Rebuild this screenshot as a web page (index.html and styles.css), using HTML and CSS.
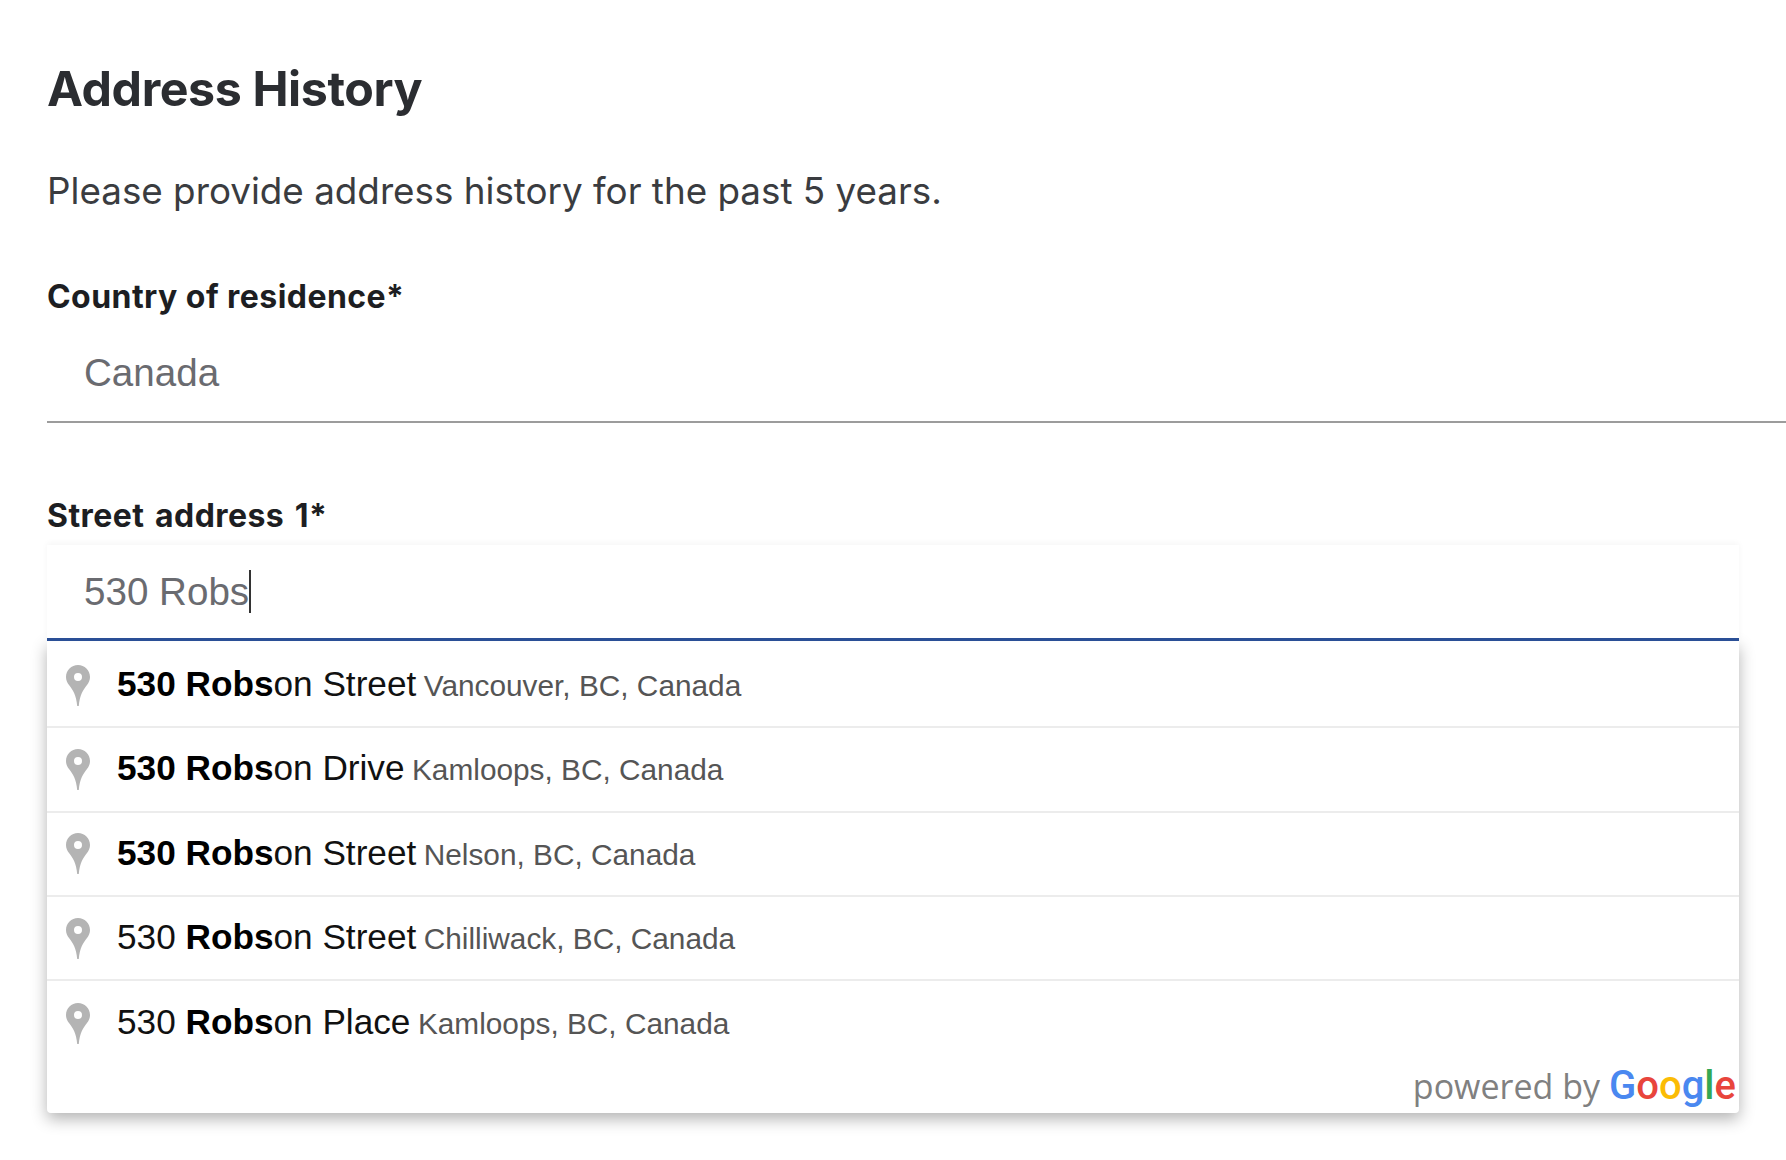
FILE: index.html
```html
<!DOCTYPE html>
<html lang="en">
<head>
<meta charset="utf-8">
<title>Address History</title>
<link rel="stylesheet" href="styles.css">
</head>
<body>
<main class="page">
  <h1 class="title">Address History</h1>
  <p class="intro">Please provide address history for the past 5 years.</p>

  <section class="field country">
    <div class="label">Country of residence*</div>
    <div class="value">Canada</div>
  </section>

  <section class="field street">
    <div class="label">Street address 1*</div>
    <div class="combo">
      <div class="input">
        <span class="value-text">530 Robs</span><span class="caret"></span>
      </div>
      <div class="dropdown">
        <ul class="results">
          <li class="row">
            <svg class="pin" viewBox="0 0 24 41"><path fill-rule="evenodd" d="M12 0C5.4 0 0 5.3 0 12c0 3.2 1.2 5.6 3 8 3.6 4.600 7.400 10 8.200 21h1.600C13.600 30 17.400 24.600 21 20c1.800-2.400 3-4.800 3-8C24 5.300 18.600 0 12 0zm0 8a4 4 0 1 1 0 8 4 4 0 0 1 0-8z"/></svg>
            <span class="main"><b>530 Robs</b>on Street</span><span class="sub">Vancouver, BC, Canada</span>
          </li>
          <li class="row">
            <svg class="pin" viewBox="0 0 24 41"><path fill-rule="evenodd" d="M12 0C5.4 0 0 5.3 0 12c0 3.2 1.2 5.6 3 8 3.6 4.600 7.400 10 8.200 21h1.600C13.600 30 17.400 24.600 21 20c1.800-2.400 3-4.800 3-8C24 5.300 18.600 0 12 0zm0 8a4 4 0 1 1 0 8 4 4 0 0 1 0-8z"/></svg>
            <span class="main"><b>530 Robs</b>on Drive</span><span class="sub">Kamloops, BC, Canada</span>
          </li>
          <li class="row">
            <svg class="pin" viewBox="0 0 24 41"><path fill-rule="evenodd" d="M12 0C5.4 0 0 5.3 0 12c0 3.2 1.2 5.6 3 8 3.6 4.600 7.400 10 8.200 21h1.600C13.600 30 17.400 24.600 21 20c1.800-2.400 3-4.800 3-8C24 5.300 18.600 0 12 0zm0 8a4 4 0 1 1 0 8 4 4 0 0 1 0-8z"/></svg>
            <span class="main"><b>530 Robs</b>on Street</span><span class="sub">Nelson, BC, Canada</span>
          </li>
          <li class="row">
            <svg class="pin" viewBox="0 0 24 41"><path fill-rule="evenodd" d="M12 0C5.4 0 0 5.3 0 12c0 3.2 1.2 5.6 3 8 3.6 4.600 7.400 10 8.200 21h1.600C13.600 30 17.400 24.600 21 20c1.800-2.400 3-4.800 3-8C24 5.300 18.600 0 12 0zm0 8a4 4 0 1 1 0 8 4 4 0 0 1 0-8z"/></svg>
            <span class="main">530 <b>Robs</b>on Street</span><span class="sub">Chilliwack, BC, Canada</span>
          </li>
          <li class="row last">
            <svg class="pin" viewBox="0 0 24 41"><path fill-rule="evenodd" d="M12 0C5.4 0 0 5.3 0 12c0 3.2 1.2 5.6 3 8 3.6 4.600 7.400 10 8.200 21h1.600C13.600 30 17.400 24.600 21 20c1.800-2.400 3-4.800 3-8C24 5.300 18.600 0 12 0zm0 8a4 4 0 1 1 0 8 4 4 0 0 1 0-8z"/></svg>
            <span class="main">530 <b>Robs</b>on Place</span><span class="sub">Kamloops, BC, Canada</span>
          </li>
        </ul>
        <div class="powered">
          <span class="by">powered by</span>
          <span class="google"><span class="g-blue">G</span><span class="g-red">o</span><span class="g-yellow">o</span><span class="g-blue">g</span><span class="g-green">l</span><span class="g-red">e</span></span>
        </div>
      </div>
    </div>
  </section>
</main>
</body>
</html>
```
FILE: styles.css
```css
* { box-sizing: border-box; }
html, body { margin: 0; padding: 0; background: #fff; }
body { width: 1786px; height: 1160px; overflow: hidden; font-family: "Inter", "Liberation Sans", sans-serif; }
.page { padding: 58px 0 0 47px; }
.title { margin: 0; font-size: 48.300px; line-height: 62px; font-weight: 700; color: #2b2d31; letter-spacing: -0.4px; }
.intro { margin: 48px 0 0; font-size: 36.800px; line-height: 46px; font-weight: 400; color: #3a3c40; }
.field .label { font-size: 32px; line-height: 40px; font-weight: 700; color: #1d1e22; letter-spacing: .45px; }
.street .label { word-spacing: 2.500px; }
.country { margin-top: 63px; }
.value { height: 106px; padding: 34px 0 0 37px; font-family: "Liberation Sans", sans-serif; font-size: 38.600px; line-height: 44px; color: #6a6b70; border-bottom: 2px solid #9c9c9c; }
.street { margin-top: 73px; margin-right: 47px; }
.combo { margin-top: 9px; }
.input { position: relative; z-index: 1; height: 96px; padding: 25px 0 0 37px; display: flex; align-items: flex-start; font-family: "Liberation Sans", sans-serif; font-size: 38.600px; line-height: 44px; color: #6a6b70; background: #fff; border-bottom: 3px solid #2a4f96; box-shadow: 0 -2px 6px rgba(0,0,0,.04); }
.caret { width: 2px; height: 43px; background: #333; }
.dropdown { background: #fff; box-shadow: 0 6px 16px rgba(0,0,0,.3); border-radius: 0 0 4px 4px; }
.results { list-style: none; margin: 0; padding: 3px 0 0; font-family: "Liberation Sans", sans-serif; }
.row { height: 84.300px; padding-left: 19px; display: flex; align-items: center; border-bottom: 2px solid #ececec; }
.row.last { border-bottom: 0; }
.pin { width: 24px; height: 41px; fill: #b4b4b4; flex: none; margin-right: 27px; }
.main { font-size: 35.200px; color: #111; position: relative; top: -1px; }
.main b { font-weight: 700; color: #000; }
.sub { font-size: 29.800px; color: #555; margin-left: 7.500px; position: relative; top: 1px; }
.powered { height: 48px; padding: 1px 3px 0 0; line-height: 40px; display: flex; justify-content: flex-end; align-items: baseline; gap: 9px; font-family: "Open Sans", sans-serif; }
.by { font-size: 34px; color: #808080; }
.google { font-family: "Roboto", sans-serif; font-size: 40px; font-weight: 500; }
.g-blue { color: #4a88f0; }
.g-red { color: #e8453c; }
.g-yellow { color: #fbbc05; }
.g-green { color: #34a853; }
```
